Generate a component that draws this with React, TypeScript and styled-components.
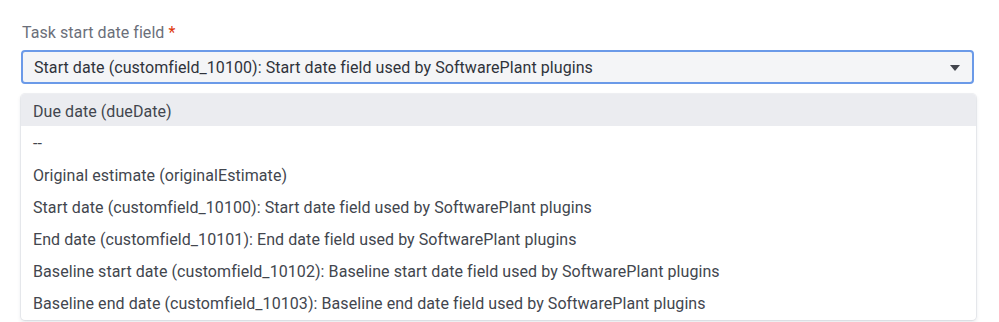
import React from "react";
import styled, { createGlobalStyle } from "styled-components";

const Global = createGlobalStyle`
  html, body { margin: 0; padding: 0; background: #ffffff; }
  body { font-family: Roboto, "Noto Sans", Arial, sans-serif; }
  * { box-sizing: border-box; }
`;

const Page = styled.div`
  width: 999px;
  height: 322px;
  overflow: hidden;
  padding: 22px 24px 0 21px;
`;

const Label = styled.label`
  display: block;
  font-size: 16px;
  line-height: 22px;
  color: #6b6f7a;
  letter-spacing: 0.06px;
  margin: 0 0 6px 1px;
`;

const Required = styled.span`
  color: #de350b;
  margin-left: 4px;
`;

const Field = styled.div`
  position: relative;
  width: 953px;
`;

const Control = styled.div`
  height: 34px;
  border: 2px solid #6b9ae8;
  border-radius: 4px;
  background: #f4f5f7;
  display: flex;
  align-items: center;
  padding: 1px 12px 0 11px;
  font-size: 16px;
  letter-spacing: 0.07px;
  color: #2f333b;
`;

const Value = styled.span`
  flex: 1;
`;

const Caret = styled.svg`
  width: 10px;
  height: 6px;
  fill: #42454d;
`;

const Menu = styled.ul`
  list-style: none;
  margin: 10px 0 0 0;
  padding: 0 0 2px 0;
  width: 955px;
  background: #ffffff;
  border-radius: 4px;
  box-shadow: 0 0 0 1px rgba(9, 30, 66, 0.06), 0 2px 4px rgba(9, 30, 66, 0.12);
  overflow: hidden;
`;

const Option = styled.li<{ $active?: boolean }>`
  height: 32px;
  display: flex;
  align-items: center;
  padding: 2px 12px 0;
  font-size: 16px;
  letter-spacing: 0.07px;
  color: #42464e;
  background: ${(p) => (p.$active ? "#ebecf0" : "transparent")};
`;

const options = [
  "Due date (dueDate)",
  "--",
  "Original estimate (originalEstimate)",
  "Start date (customfield_10100): Start date field used by SoftwarePlant plugins",
  "End date (customfield_10101): End date field used by SoftwarePlant plugins",
  "Baseline start date (customfield_10102): Baseline start date field used by SoftwarePlant plugins",
  "Baseline end date (customfield_10103): Baseline end date field used by SoftwarePlant plugins",
];

export default function App() {
  return (
    <>
      <Global />
      <Page>
        <Label>
          Task start date field<Required>*</Required>
        </Label>
        <Field>
          <Control>
            <Value>Start date (customfield_10100): Start date field used by SoftwarePlant plugins</Value>
            <Caret viewBox="0 0 10 6">
              <path d="M0 0 H10 L5 6 Z" />
            </Caret>
          </Control>
          <Menu>
            {options.map((o, i) => (
              <Option key={i} $active={i === 0}>
                {o}
              </Option>
            ))}
          </Menu>
        </Field>
      </Page>
    </>
  );
}
